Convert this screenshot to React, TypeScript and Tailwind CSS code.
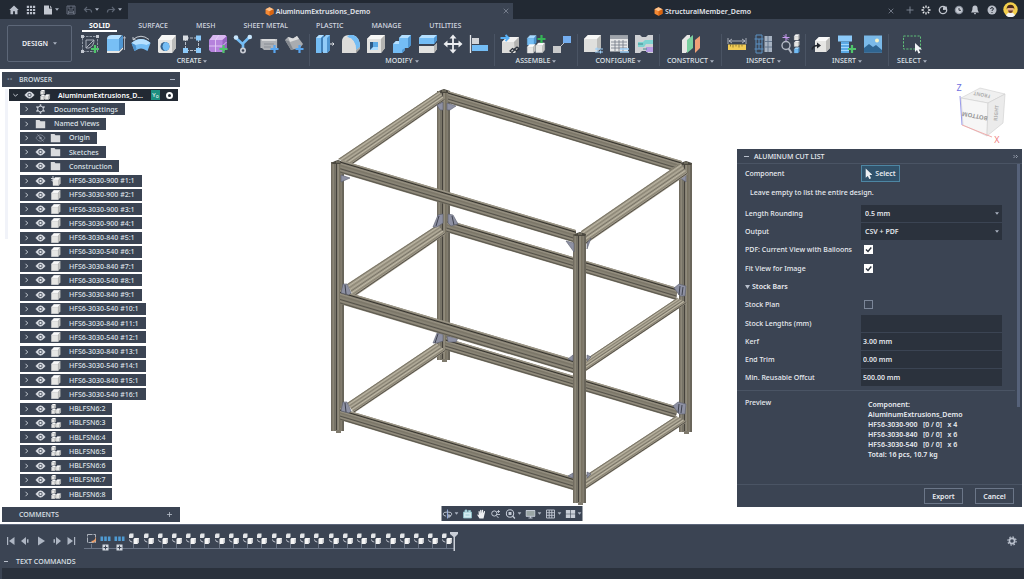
import type { ReactNode } from "react";

/* ---------- shared pieces ---------- */

function Caret({ className = "" }: { className?: string }) {
  return (
    <svg viewBox="0 0 4 3" className={`h-[3px] w-[4px] shrink-0 ${className}`} aria-hidden="true">
      <path d="M0 .3h4L2 2.7z" fill="#a9b1bf" />
    </svg>
  );
}

function Icon({ children, className = "h-5 w-5", box = 20 }: { children: ReactNode; className?: string; box?: number }) {
  return (
    <svg viewBox={`0 0 ${box} ${box}`} className={`block shrink-0 ${className}`} aria-hidden="true" fill="none">
      {children}
    </svg>
  );
}

function Solid({ x = 0, y = 0, s = 1, blue = false }: { x?: number; y?: number; s?: number; blue?: boolean }) {
  const [top, front, side] = blue ? ["#a9dbff", "#74bdf5", "#4d96d2"] : ["#fafafa", "#e6e6e4", "#c4c4c2"];
  return (
    <g transform={`translate(${x} ${y}) scale(${s})`}>
      <path d="M3 0h6.500L7.500 3H.5z" fill={top} strokeLinejoin="round" stroke={top} strokeWidth=".5" />
      <path d="M.4 3h7v7h-7z" fill={front} strokeLinejoin="round" stroke={front} strokeWidth=".5" />
      <path d="M7.500 3L9.700.3v7L7.500 10z" fill={side} strokeLinejoin="round" stroke={side} strokeWidth=".4" />
    </g>
  );
}

function Plus({ x, y, c }: { x: number; y: number; c: string }) {
  return <path d={`M${x - 4} ${y}h8M${x} ${y - 4}v8`} stroke={c} strokeWidth="2.2" />;
}

/* ---------- title bar ---------- */

function Cube() {
  return (
    <Icon className="h-[9px] w-[9px]" box={10}>
      <path d="M5 .3l4.400 2.200v5L5 9.800.6 7.500v-5z" fill="#f58a35" />
      <path d="M5 .3l4.400 2.200L5 4.800.6 2.500z" fill="#ffc38c" />
      <path d="M5 4.800l4.400-2.300v5L5 9.800z" fill="#d9640f" />
    </Icon>
  );
}

function DocumentTab({ title, active }: { title: string; active?: boolean }) {
  return (
    <div className={`mt-[3px] flex flex-1 items-center px-1 ${active ? "bg-[#3b4453]" : ""}`}>
      <a href="#document" className="flex flex-1 items-center justify-center gap-[2px] font-semibold text-[#e3e6ec]">
        <Cube />
        {title}
      </a>
      <button aria-label={`Close ${title}`} className="h-[6px] w-[6px]">
        <Icon className="h-[6px] w-[6px]" box={6}>
          <path d="M.7.7l4.600 4.600M5.300.7L.7 5.300" stroke="#848c99" strokeWidth=".8" />
        </Icon>
      </button>
    </div>
  );
}

const quickActions: { label: string; art: ReactNode; caret?: boolean }[] = [
  { label: "Home", art: <path d="M5 .5L.3 5h1.200v4.300h2.600V6.200h1.800v3.100h2.600V5h1.200z" fill="#b9bfca" /> },
  {
    label: "Data panel",
    art: <path d="M.8.8h2.200v2.200H.8zM3.900.8h2.200v2.200H3.900zM7 .8h2.200v2.200H7zM.8 3.900h2.200v2.200H.8zM3.900 3.900h2.200v2.200H3.900zM7 3.900h2.200v2.200H7zM.8 7h2.200v2.200H.8zM3.900 7h2.200v2.200H3.900zM7 7h2.200v2.200H7z" fill="#b9bfca" />,
  },
  { label: "File", caret: true, art: <path d="M1 .5h5v3h3v6H1zM7 .5L9 2.800H7z" fill="#c3c8d1" /> },
  { label: "Save", art: <path d="M1 1h8v8H1zM3 1v3h4V1M2.500 9V6h5v3M3 7.400h4" stroke="#6d7583" strokeWidth=".9" /> },
  { label: "Undo", caret: true, art: <path d="M4 2L1.500 4.500 4 7M1.800 4.500H6q2.600 0 2.600 3" stroke="#5d6573" strokeWidth="1.200" /> },
  { label: "Redo", caret: true, art: <path d="M6 2l2.500 2.500L6 7M8.200 4.500H4q-2.600 0-2.600 3" stroke="#5d6573" strokeWidth="1.200" /> },
];

const sessionActions: { label: string; art: ReactNode }[] = [
  { label: "New tab", art: <path d="M5 1.500v7M1.500 5h7" stroke="#858d9a" strokeWidth=".9" /> },
  {
    label: "Extensions",
    art: (
      <path
        d="M5 .5v2.300M5 7.200v2.300M.5 5h2.300M7.200 5h2.300M1.800 1.800l1.600 1.600M6.600 6.600l1.600 1.600M8.200 1.800L6.600 3.400M3.400 6.600L1.800 8.200"
        stroke="#eef0f3"
        strokeWidth="1.300"
      />
    ),
  },
  {
    label: "Updates",
    art: (
      <>
        <circle cx="5" cy="5" r="3.700" stroke="#bfc4cd" strokeWidth="1.300" />
        <path d="M5 5V2.200l3.800-.7.2 3.300z" fill="#bfc4cd" />
      </>
    ),
  },
  {
    label: "Job status",
    art: (
      <>
        <circle cx="5" cy="5" r="4.300" fill="#8f96a3" />
        <circle cx="5" cy="5" r="3" fill="#c9cdd5" />
        <path d="M5 3v2.300h2" stroke="#222933" strokeWidth=".9" />
      </>
    ),
  },
  {
    label: "Notifications",
    art: <path d="M5 .5c-2 0-2.600 1.600-2.600 3.200C2.400 5.600 1.700 6.200 1 7.400h8C8.300 6.200 7.600 5.600 7.600 3.700 7.600 2.100 7 .5 5 .5zM4 8.100h2q-.1 1.300-1 1.300T4 8.100z" fill="#bfc4cd" />,
  },
  {
    label: "Help",
    art: (
      <>
        <circle cx="5" cy="5" r="4.500" fill="#b9bec8" />
        <path d="M3.600 4q0-1.400 1.400-1.400T6.400 4q0 .8-1.400 1.400v.6M5 7v1" stroke="#222933" strokeWidth="1" />
      </>
    ),
  },
];

function TitleBar() {
  return (
    <header className="flex h-[19px] bg-[#222933]">
      <div className="flex w-32 items-center gap-[7px] pl-[9px]">
        {quickActions.map((a) => (
          <button key={a.label} aria-label={a.label} className="flex items-center gap-[2px]">
            <Icon className="h-[10px] w-[10px]" box={10}>{a.art}</Icon>
            {a.caret && <Caret />}
          </button>
        ))}
      </div>
      <nav className="flex flex-1" aria-label="Open documents">
        <DocumentTab title="AluminumExtrusions_Demo" active />
        <DocumentTab title="StructuralMember_Demo" />
      </nav>
      <div className="flex w-[126px] items-center justify-between pr-[6px] pl-[7px]">
        {sessionActions.map((a) => (
          <button key={a.label} aria-label={a.label}>
            <Icon className="h-[10px] w-[10px]" box={10}>{a.art}</Icon>
          </button>
        ))}
        <button aria-label="Account">
          <Icon className="h-[15px] w-[15px]" box={15}>
            <circle cx="7.500" cy="7.500" r="7.200" fill="#f3cf4c" />
            <path d="M3 13.500q1-3 4.500-3t4.500 3a7.200 7.200 0 0 1-9 0z" fill="#f4f4f4" />
            <circle cx="7.500" cy="7.500" r="3" fill="#e3ad88" />
            <path d="M3.600 7.500Q3.500 2.700 7.500 2.700t3.900 4.800l-1-1.500H4.600z" fill="#4a2a1e" />
            <path d="M5 8.500h5q-.5 2.500-2.500 2.500T5 8.500z" fill="#6b3a28" />
          </Icon>
        </button>
      </div>
    </header>
  );
}

/* ---------- ribbon ---------- */

const ribbonTabs = ["SOLID", "SURFACE", "MESH", "SHEET METAL", "PLASTIC", "MANAGE", "UTILITIES"];

const tools: Record<string, ReactNode> = {
  sketch: (
    <>
      <path d="M2.500 2.500h15v15h-15z" stroke="#a7aeba" strokeWidth=".8" strokeDasharray="2.500 1" />
      <path d="M1 1h3v3H1zM16 1h3v3h-3zM1 16h3v3H1z" fill="#c3c8d1" />
      <path d="M6 6v8h3q5-2 5-8zM6 14l8-8" stroke="#b4bac5" strokeWidth=".9" />
      <Plus x={15} y={15} c="#4fc56b" />
    </>
  ),
  extrude: (
    <>
      <path d="M1 17h12l4-4v2l-4 4H1z" fill="#e6e6e4" />
      <path d="M1 5q0-4 5-4h10l-3 4z" fill="#b5e0ff" />
      <path d="M1 5h12v12H1z" fill="#78bff5" />
      <path d="M13 5l4-4v12l-4 4z" fill="#4f96d2" />
      <path d="M18.500 16V3M17.200 4.500l1.300-2 1.300 2" stroke="#c3c8d1" strokeWidth=".8" />
    </>
  ),
  revolve: (
    <>
      <path d="M.5 9Q10 1 19.500 9l-3 8-4-2q-2.500-1-5 0l-4 2z" fill="#74bdf5" />
      <path d="M.5 9Q10 1 19.500 9l-4 2q-5-2-11 0z" fill="#b5e0ff" />
      <path d="M.5 9l3 8 2-2-1-4z" fill="#4c92cd" />
      <path d="M2 5.500Q10-1 18 5.500M2 3v2.700h2.500" stroke="#d6dae0" strokeWidth=".9" />
    </>
  ),
  hole: (
    <>
      <path d="M1 6l4-5h13l1 1v12l-4 5H2l-1-1z" fill="#e6e6e4" />
      <path d="M1 6l4-5h14l-4 5z" fill="#f7f7f6" />
      <path d="M15 6l4-4.500V14l-4 5z" fill="#bcbcba" />
      <circle cx="8" cy="12.500" r="4.500" fill="#36618a" />
      <path d="M5.500 12.500q0-3 2.500-4.500 4.500.3 4.500 4.500T8 17q-2.500-1.500-2.500-4.500z" fill="#74bdf5" />
    </>
  ),
  pattern: (
    <>
      <path d="M4 4h12M3.500 4v12M4 16.500h12M16.500 5v11" stroke="#c3c8d1" strokeWidth=".9" strokeDasharray="3 1" />
      <path d="M1 1.500h5v5H1z" fill="#d9dde2" />
      <path d="M14 1.500h5v5h-5zM1 14h5v5H1zM14 14h5v5h-5z" fill="#8ccafa" />
    </>
  ),
  form: (
    <>
      <path d="M1 6l4-5h12l2 2v11l-4 4H3l-2-2z" fill="#b582dc" strokeLinejoin="round" />
      <path d="M1.500 6L5 1h12l1.500 1.500L14.500 6z" fill="#d9b9f1" />
      <path d="M14.500 6l4.500-4v12l-4.500 4z" fill="#9564bf" />
      <path d="M7.500 6v12M1 12h13.500l4-4M11 1L7.500 6" stroke="#e9d4f8" strokeWidth=".8" />
      <Plus x={15.500} y={15} c="#4fc56b" />
    </>
  ),
  derive: (
    <>
      <path d="M3 4l6.500 6L16 3.500M10 10v6" stroke="#74bdf5" strokeWidth="2.600" />
      <circle cx="3" cy="3.500" r="2.300" fill="#c8e6fc" />
      <circle cx="16.800" cy="3" r="2.300" fill="#c8e6fc" />
      <circle cx="10" cy="16.500" r="3" fill="#c9cdd5" />
      <circle cx="10" cy="16.500" r="1.300" fill="#3b4453" />
    </>
  ),
  gear: (
    <>
      <path d="M1.500 9.500h17" stroke="#c3c5c8" strokeWidth="9" strokeDasharray="2.200 1.400" />
      <path d="M3 5h13l2 3v5l-3 3H5l-3-3V7z" fill="#aeb1b5" />
      <path d="M3 5h13l1 2H3z" fill="#d9dadb" />
      <path d="M5 10h10M5 13h7" stroke="#868b92" strokeWidth=".9" />
      <Plus x={15.500} y={15} c="#58a6f0" />
    </>
  ),
  bar: (
    <>
      <path d="M1 6l3-3 5 1.500L13 2l6 8-3 4-9 2z" fill="#a9acb0" />
      <path d="M4 3l5 1.500L13 2l2 3-9 3z" fill="#dcddde" />
      <path d="M1 6l6 10 2-1-4-8z" fill="#83888f" />
      <Plus x={15.500} y={15} c="#58a6f0" />
    </>
  ),
  press: (
    <>
      <path d="M1 4l3-3h5v15l-3 3H1z" fill="#74bdf5" />
      <path d="M1 4l3-3h5L6 4z" fill="#b5e0ff" />
      <path d="M6 4l3-3v15l-3 3z" fill="#3f7fb8" />
      <path d="M8 4l3-3h4v15l-3 3H8z" fill="#91ccf9" />
      <path d="M12 4l3-3v15l-3 3z" fill="#4f96d2" />
      <path d="M15 10h4M17.500 8.500L19 10l-1.500 1.500" stroke="#e4e6ea" strokeWidth="1" />
    </>
  ),
  fillet: (
    <>
      <path d="M1 8q0-7 7-7h4q7 2 7 12l-4 6H1z" fill="#e2e2e0" />
      <path d="M8 1h4q7 2 7 12l-4 3Q15 5 6 3z" fill="#74bdf5" />
      <path d="M1 8q1-5 5-5 9 2 9 13v3H1z" fill="#dcdcda" />
      <path d="M15 16l4-3v2l-4 4z" fill="#a5a5a3" />
    </>
  ),
  shell: (
    <>
      <path d="M1 5l4-4h14v13l-4 5H1z" fill="#e2e2e0" />
      <path d="M1 5l4-4h14l-4 4z" fill="#f7f7f6" />
      <path d="M15 5l4-4v13l-4 5z" fill="#b4b4b2" />
      <path d="M4 8h8v8H4z" fill="#2e5a85" />
      <path d="M7 8h5v5H7z" fill="#5ba9e5" />
      <path d="M4 16l3-3h5v3z" fill="#a9dbff" />
    </>
  ),
  combine: (
    <>
      <path d="M7 4l3-3h9v10l-3 3h-3v2l-3 3H1V10l3-3h3z" fill="#74bdf5" />
      <path d="M7 4l3-3h9l-3 3zM1 10l3-3h3v3z" fill="#b5e0ff" />
      <path d="M16 4l3-3v10l-3 3zM10 16l3-2v2l-3 3z" fill="#4f96d2" />
    </>
  ),
  split: (
    <>
      <path d="M1 4l3-3h15v5l-3 4H1z" fill="#74bdf5" />
      <path d="M1 4l3-3h15l-3 3z" fill="#b5e0ff" />
      <path d="M16 4l3-3v5l-3 4z" fill="#4f96d2" />
      <path d="M1 12h15l3-3v6l-3 4H1z" fill="#e2e2e0" />
      <path d="M16 12l3-3v6l-3 4z" fill="#b4b4b2" />
    </>
  ),
  move: (
    <path
      d="M10 .5L6.500 4.500h2.600v4.600H4.500V6.500L.5 10l4 3.500v-2.600h4.600v4.600H6.500L10 19.500l3.500-4h-2.600v-4.600h4.600v2.600l4-3.500-4-3.500v2.600h-4.600V4.500h2.600z"
      fill="#eceef1"
    />
  ),
  align: (
    <>
      <path d="M1.500 1v18" stroke="#e4e6ea" strokeWidth="1.300" />
      <path d="M3 4h7v6H3z" fill="#d3d5d8" />
      <path d="M3 11h16v6H3z" fill="#74bdf5" />
    </>
  ),
  newComponent: (
    <>
      <path d="M2 8l5-5h12v9l-4 7H2z" fill="#dcdcda" />
      <path d="M2 8l5-5h12l-5 5z" fill="#f2f2f1" />
      <path d="M14 8l5-5v9l-4 7z" fill="#b4b4b2" />
      <path d="M.5 4h7M5.500 1l3 3-3 3" stroke="#58b0f5" strokeWidth="2" />
      <path d="M10 17l2.500-2.500 2 1.500L12 18.500zM14.500 15l2.500-2 2 2-2.500 2z" stroke="#2b323d" strokeWidth="1.300" />
    </>
  ),
  addComponent: (
    <>
      <Solid x={1} y={1.500} s={0.95} blue />
      <Solid x={1} y={10.500} s={0.85} />
      <Solid x={9.500} y={9} s={0.95} />
      <Plus x={15.500} y={5} c="#35b556" />
    </>
  ),
  joint: (
    <>
      <path d="M9 12l3-3" stroke="#dfe2e6" strokeWidth=".8" />
      <path d="M1 12h8v7H1z" fill="#c9cacb" />
      <path d="M11 2h8v7h-8z" fill="#74aef0" />
    </>
  ),
  configure: (
    <>
      <path d="M1 5l4-4h13v13l-4 4H1z" fill="#dfdfdd" />
      <path d="M1 5l4-4h13l-4 4z" fill="#f7f7f6" />
      <path d="M14 5l4-4v13l-4 4z" fill="#bcbcba" />
      <path d="M12 15h8M12 18h8M14 13.500v3M17.500 16.500v3" stroke="#9fd0f7" strokeWidth="1.100" />
    </>
  ),
  table: (
    <>
      <path d="M1 1.500h18v16H1z" fill="#e6e7e8" />
      <path d="M1 1.500h18v3.500H1z" fill="#9fa4ab" />
      <path d="M2 8h16M2 11h16M2 14h16M6 6v11M10 6v11M14 6v11" stroke="#6f7783" strokeWidth=".8" />
      <path d="M11 15h9M11 18h9" stroke="#9fd0f7" strokeWidth="1.300" />
    </>
  ),
  theme: (
    <>
      <path d="M1 1h5l2 2h4l2-2h5v18h-5l-2-2H8l-2 2H1z" fill="#cfd1d4" />
      <path d="M4 8h5l2-2h8v4h-7l-2 3H4z" fill="#7fd4d2" />
      <path d="M12 13h7v5h-7z" fill="#b59be3" />
      <path d="M4 10h5M9 15h4" stroke="#3b7f86" strokeWidth=".9" />
    </>
  ),
  plane: (
    <>
      <path d="M1 6l5-5h3v13l-4 5H1z" fill="#e7e7e5" />
      <path d="M6 6l6-5v13l-6 5z" fill="#7ad0a0" />
      <path d="M14 6l5-4v12l-5 5z" fill="#f0a077" />
    </>
  ),
  measure: (
    <>
      <path d="M1 4v6M19 4v6M2 7h16M5 5L2 7l3 2M15 5l3 2-3 2" stroke="#c3c8d1" strokeWidth=".8" />
      <path d="M1 10.500h18v5.500H1z" fill="#f2cc55" />
      <path d="M3.500 10.500v2M6 10.500v3M9 10.500v2M12 10.500v3M15 10.500v2" stroke="#6b5a20" strokeWidth=".7" />
    </>
  ),
  section: (
    <>
      <path d="M2 1h6v18H2zM.5 5h9M.5 15h9M5 5v10M2 10h6" stroke="#5d92c4" strokeWidth="1" />
      <path d="M10.500 2H18v16h-7.500z" fill="#a7b3c2" />
      <path d="M10.500 7.500H18M10.500 13H18M14 2v16" stroke="#5e7088" strokeWidth=".9" />
    </>
  ),
  interfere: (
    <>
      <path d="M6 0v7M2.500 3.500h7M3.700 1.200l4.600 4.600" stroke="#c79af0" strokeWidth="1" />
      <circle cx="6" cy="11.500" r="4" stroke="#b4bac5" strokeWidth="1.400" />
      <path d="M8.500 14.500l3 4.500" stroke="#b4bac5" strokeWidth="2" />
      <Solid x={14} y={0.5} s={0.55} />
      <Solid x={14} y={7} s={0.55} />
      <Solid x={14} y={13.500} s={0.55} blue />
    </>
  ),
  insert: (
    <>
      <path d="M4 7l4-4h11v11l-4 4H4z" fill="#e6e6e4" />
      <path d="M4 7l4-4h11l-4 4z" fill="#fafafa" />
      <path d="M15 7l4-4v11l-4 4z" fill="#bcbcba" />
      <path d="M1 15.500q1-4 6-4" stroke="#23272e" strokeWidth="1.600" />
      <path d="M6 8.500l4 3-4 3z" fill="#23272e" />
    </>
  ),
  bolt: (
    <>
      <path d="M1 1.500h14v6H1z" fill="#8ccafa" />
      <path d="M4 7.500h8V19H4z" fill="#5ba9e5" />
      <path d="M4 10.500h8M4 13.500h8M4 16.500h8" stroke="#a9dbff" strokeWidth=".9" />
      <Plus x={15} y={15} c="#4fc56b" />
    </>
  ),
  canvas: (
    <>
      <path d="M1 1.500h18v17H1z" fill="#7ab9e8" />
      <circle cx="14" cy="6.500" r="2" fill="#f4f2c8" />
      <path d="M1 14l5-4 4 3 3-2 6 5v2.500H1z" fill="#2f6591" />
    </>
  ),
  select: (
    <>
      <path d="M1.500 2h17v13h-17z" stroke="#5fbf78" strokeWidth="1" strokeDasharray="2.200 1.300" />
      <path d="M13 9v9l2-2 1.500 3.500 1.800-.8-1.600-3.200H20z" fill="#f4f5f7" />
    </>
  ),
};

const groups: { name: string; width: string; items: string[] }[] = [
  { name: "CREATE", width: "w-[235px]", items: ["sketch", "extrude", "revolve", "hole", "pattern", "form", "derive", "gear", "bar"] },
  { name: "MODIFY", width: "w-[185px]", items: ["press", "fillet", "shell", "combine", "split", "move", "align"] },
  { name: "ASSEMBLE", width: "w-[83px]", items: ["newComponent", "addComponent", "joint"] },
  { name: "CONFIGURE", width: "w-[82px]", items: ["configure", "table", "theme"] },
  { name: "CONSTRUCT", width: "w-[62px]", items: ["plane"] },
  { name: "INSPECT", width: "w-[84px]", items: ["measure", "section", "interfere"] },
  { name: "INSERT", width: "w-[83px]", items: ["insert", "bolt", "canvas"] },
  { name: "SELECT", width: "w-[46px]", items: ["select"] },
];

function Ribbon() {
  return (
    <section className="flex h-[50px] items-start bg-[#3b4453] pl-[7px]" aria-label="Ribbon">
      <button className="mt-[6px] flex h-[37px] w-[65px] items-center justify-center gap-[5px] rounded-[2px] border border-[#5d6778] font-semibold text-[#eef0f4]">
        DESIGN
        <Caret />
      </button>
      <div className="pl-[3px]">
        <nav className="flex gap-[14px] pl-[7px]" aria-label="Workspace tabs">
          {ribbonTabs.map((t, i) => (
            <a
              key={t}
              href={`#${t.toLowerCase()}`}
              className={`h-[13px] border-b-2 px-[7px] leading-[13px] ${
                i === 0 ? "border-white font-bold text-white" : "border-transparent font-medium text-[#d3d8e0]"
              }`}
            >
              {t}
            </a>
          ))}
        </nav>
        <div className="mt-[2px] flex">
          {groups.map((g) => (
            <div key={g.name} className={`flex h-[32px] flex-col border-r border-[#4a5464] last:border-r-0 ${g.width}`}>
              <div className={`flex px-[5px] ${g.items.length === 1 ? "justify-center" : "justify-between"}`}>
                {g.items.map((n) => (
                  <button key={n} aria-label={n} className="h-5 w-5">
                    <Icon>{tools[n]}</Icon>
                  </button>
                ))}
              </div>
              <button className="flex items-center justify-center gap-[2px] leading-[14px] font-medium text-[#dfe3e9]">
                {g.name}
                <Caret />
              </button>
            </div>
          ))}
        </div>
      </div>
    </section>
  );
}

/* ---------- browser tree ---------- */

function Chevron({ open }: { open?: boolean }) {
  return (
    <Icon className="h-[6px] w-[13px]" box={6}>
      <path d={open ? "M.8 2l2.200 2.200L5.200 2" : "M2 .8L4.200 3 2 5.200"} stroke="#d3d8e0" strokeWidth=".9" />
    </Icon>
  );
}

function Eye({ off }: { off?: boolean }) {
  const c = off ? "#98a0ae" : "#dcdfe5";
  return (
    <Icon className="h-[10px] w-[15px]" box={10}>
      <path d="M.3 5Q5-1.500 9.700 5 5 11.500.3 5z" fill={off ? "none" : c} stroke={c} strokeWidth=".6" />
      <circle cx="5" cy="5" r="2.100" fill="#3b4453" />
      <circle cx="5" cy="5" r="1.200" fill={c} />
      {off && <path d="M2 1.500l6 7" stroke={c} strokeWidth=".8" />}
    </Icon>
  );
}

const nodeArt: Record<string, ReactNode> = {
  settings: (
    <>
      <circle cx="5" cy="5" r="2.900" stroke="#c9ced7" strokeWidth="1" />
      <path
        d="M5 .3v2M5 7.700v2M.9 2.600l1.800 1M7.300 6.400l1.800 1M.9 7.400l1.800-1M7.300 3.600l1.800-1"
        stroke="#c9ced7"
        strokeWidth="1.600"
      />
    </>
  ),
  folder: <path d="M.3 1h3.700l1 1.200h4.700v7H.3z" fill="#d9dbde" />,
  body: <Solid x={0.6} y={0.3} s={0.94} />,
  grounded: (
    <>
      <Solid x={2.200} y={1.500} s={0.8} />
      <path d="M2.500 0v5M.5 2.500h4M1 4l1.500 1.500L4 4" stroke="#e1e4e9" strokeWidth=".9" />
    </>
  ),
  assembly: (
    <>
      <Solid x={0.8} y={0} s={0.46} />
      <Solid x={0.8} y={5} s={0.48} />
      <Solid x={5.400} y={4.500} s={0.5} />
    </>
  ),
};

type Node = { label: string; art: string; eye?: "on" | "off" };

const parts = [900, 900, 900, 900, 840, 540, 840, 540, 840, 540, 840, 540, 840, 540, 840, 540];

const nodes: Node[] = [
  { label: "Document Settings", art: "settings" },
  { label: "Named Views", art: "folder" },
  { label: "Origin", art: "folder", eye: "off" },
  { label: "Sketches", art: "folder", eye: "on" },
  { label: "Construction", art: "folder", eye: "on" },
  ...parts.map((len, i): Node => ({
    label: `HFS6-3030-${len} #${i + 1}:1`,
    art: i === 0 ? "grounded" : "body",
    eye: "on",
  })),
  ...[2, 3, 4, 5, 6, 7, 8].map((n): Node => ({ label: `HBLFSN6:${n}`, art: "assembly", eye: "on" })),
];

function Browser() {
  return (
    <aside className="relative flex w-[180px] shrink-0 flex-col pt-[3px] pb-[2px] pl-[2px]">
      <div className="absolute top-5 left-[5px] h-[150px] w-[3px] bg-[#f1f3f9]" />
      <h2 className="flex h-[15px] items-center bg-[#3b4453] px-[5px] font-medium text-[#dfe3e9]">
        <span className="w-3 text-[#7d8797]">••</span>
        <span className="flex-1">BROWSER</span>
        <button aria-label="Collapse browser" className="h-px w-[5px] bg-[#a9b1bf]" />
      </h2>
      <ul className="mt-[2px] mb-[7px] flex flex-1 flex-col items-start justify-between">
        <li className="ml-[7px] flex h-[12px] w-[169px] items-center bg-[#222933] pr-[5px] font-semibold text-white">
          <Chevron open />
          <Eye />
          <Icon className="h-[10px] w-[15px]" box={10}>{nodeArt.assembly}</Icon>
          <span className="ml-[6px] flex-1">AluminumExtrusions_D...</span>
          <span className="mr-[6px] flex h-[10px] w-[9px] items-center justify-center bg-[#1c8f80] text-[6px] font-normal text-white">
            Y<sub className="text-[5px] leading-none">o</sub>
          </span>
          <input
            type="radio"
            defaultChecked
            aria-label="Activate component"
            className="h-[7px] w-[7px] appearance-none rounded-full border-2 border-white bg-[#222933]"
          />
        </li>
        {nodes.map((n) => (
          <li key={n.label} className="ml-[18px] flex h-[12px] items-center bg-[#3b4453] pr-[7px] font-medium text-[#dfe3e9]">
            <Chevron />
            {n.eye && <Eye off={n.eye === "off"} />}
            <Icon className="h-[10px] w-[15px]" box={10}>{nodeArt[n.art]}</Icon>
            <span className="ml-[6px]">{n.label}</span>
          </li>
        ))}
      </ul>
      <h2 className="flex h-[15px] items-center justify-between bg-[#3b4453] pr-2 pl-[17px] font-medium text-[#dfe3e9]">
        COMMENTS
        <button aria-label="Add comment">
          <Icon className="h-[5px] w-[5px]" box={5}>
            <path d="M2.500 0v5M0 2.500h5" stroke="#b9c0cc" strokeWidth=".8" />
          </Icon>
        </button>
      </h2>
    </aside>
  );
}

/* ---------- model ---------- */

type Pt = [number, number];
type BeamShape = { a: Pt; b: Pt; c: Pt; d: Pt; tone: "warm" | "cool" | "post" };

const tones = {
  warm: { base: "#a09a89", stripes: ["#7b7668", "#bdb7a5", "#8b8575", "#b3ad9b", "#787366", "#bfb9a7", "#8a8474", "#55514a"] },
  cool: { base: "#827d6f", stripes: ["#a09a8a", "#34322d", "#989283", "#7c7769", "#8b8677", "#55524a", "#948e7f", "#5c594f"] },
  post: { base: "#7f7a6d", stripes: ["#6f6b5f", "#8f8a7b", "#716d61", "#45423b", "#9b9585", "#77725f", "#837e70", "#55524a"] },
};

/* a→b is one long edge of the profile, d→c the opposite one. */
function Beam({ a, b, c, d, tone }: BeamShape) {
  const t = tones[tone];
  const n = t.stripes.length;
  return (
    <g>
      <polygon points={[a, b, c, d].join(" ")} fill={t.base} />
      {t.stripes.map((color, i) => {
        const k = (i + 0.4) / n;
        return (
          <line
            key={i}
            x1={a[0] + (d[0] - a[0]) * k}
            y1={a[1] + (d[1] - a[1]) * k}
            x2={b[0] + (c[0] - b[0]) * k}
            y2={b[1] + (c[1] - b[1]) * k}
            stroke={color}
            strokeWidth="1"
          />
        );
      })}
    </g>
  );
}

function Post({ x, top, bottom }: { x: number; top: number; bottom: number }) {
  return (
    <g>
      <Beam a={[x, top]} b={[x, bottom]} c={[x + 13, bottom]} d={[x + 13, top]} tone="post" />
      <path d={`M${x + 5} ${bottom - 1}h5v3h-5z`} fill="#7f7a6d" />
      <path d={`M${x} ${top + 1}l4-2 3-1 3 1 3 1-1 2H${x + 2}z`} fill="#4b483f" />
      <path d={`M${x + 5} ${top}h4`} stroke="#8f8a7b" strokeWidth="1" />
    </g>
  );
}

const rear: BeamShape[] = [
  { a: [448, 91], b: [682, 161], c: [680, 173], d: [448, 103], tone: "cool" },
  { a: [448, 220], b: [678, 288], c: [676, 300], d: [446, 232], tone: "cool" },
  { a: [446, 338], b: [679, 407], c: [675, 418], d: [445, 350], tone: "cool" },
  { a: [338, 159], b: [439, 91], c: [445, 100], d: [353, 164], tone: "warm" },
  { a: [347, 284], b: [437, 225], c: [446, 234], d: [354, 297], tone: "warm" },
  { a: [347, 403], b: [436, 343], c: [446, 351], d: [354, 413], tone: "warm" },
];

const front: BeamShape[] = [
  { a: [341, 160], b: [576, 230], c: [576, 243], d: [340, 173], tone: "cool" },
  { a: [340, 290], b: [576, 360], c: [576, 374], d: [340, 304], tone: "cool" },
  { a: [340, 408], b: [576, 478], c: [576, 491], d: [340, 420], tone: "cool" },
  { a: [581, 231], b: [680, 163], c: [688, 174], d: [586, 244], tone: "warm" },
  { a: [586, 359], b: [677, 298], c: [687, 303], d: [586, 371], tone: "warm" },
  { a: [586, 475], b: [676, 416], c: [687, 422], d: [586, 489], tone: "warm" },
];

const rearBrackets = [
  "437,105 443,102 443,110 440,110",
  "447,103 456,106 450,110 447,110",
  "433,227 438,215 443,214 443,223 437,227",
  "448,214 453,215 458,224 451,226 448,223",
  "433,343 437,333 443,334 443,341 437,343",
  "447,336 458,338 456,342 448,342",
  "680,178 686,174 686,182",
];

const frontBrackets = [
  "341,175 350,178 341,182",
  "341,293 343,284 347,284 351,293 349,295",
  "341,411 343,402 347,402 351,411 349,413",
  "566,241 574,243 574,252",
  "587,243 591,238 587,249",
  "568,359 573,355 573,361",
  "587,355 591,357 587,361",
  "568,476 573,473 573,478",
  "587,472 591,474 587,478",
  "674,288 679,284 686,286 685,296 680,296",
  "673,406 678,402 686,404 685,414 679,414",
];

function Brackets({ shapes }: { shapes: string[] }) {
  return (
    <g fill="#8d90a2" stroke="#5c5f6e" strokeWidth=".6">
      {shapes.map((p) => (
        <polygon key={p} points={p} />
      ))}
    </g>
  );
}

/* Dark creases that split the larger gussets into two plates. */
const creases = "M439 216l-3 10M452 216l2 9M438 334l-3 9M345 285l1 9M345 403l1 9M680 286l-1 9M679 404l-1 9M683 287l-1 8M682 405l-1 8";

function Model() {
  return (
    <svg viewBox="180 69 557 455" className="h-full w-full min-w-0 flex-1" role="img" aria-label="Aluminum extrusion frame">
      <Post x={437} top={91} bottom={360} />
      <Post x={679} top={163} bottom={432} />
      {rear.map((s, i) => (
        <Beam key={i} {...s} />
      ))}
      <Brackets shapes={rearBrackets} />
      <Post x={331} top={162} bottom={431} />
      {front.slice(0, 3).map((s, i) => (
        <Beam key={i} {...s} />
      ))}
      {front.slice(3).map((s, i) => (
        <Beam key={i} {...s} />
      ))}
      <Post x={573} top={234} bottom={503} />
      <Brackets shapes={frontBrackets} />
      <path d={creases} stroke="#3f424e" strokeWidth="1" fill="none" />
    </svg>
  );
}

function ViewCube() {
  return (
    <svg viewBox="737 69 287 80" className="h-20 w-full" role="img" aria-label="View cube">
      <path d="M961 98l19-10 25 6-17 9z" fill="#f0f0f0" stroke="#cfcfcf" strokeWidth=".6" />
      <path d="M961 98l27 5-1 33-24-11z" fill="#f6f6f6" stroke="#cccccc" strokeWidth=".6" />
      <path d="M988 103l17-9-2 29-16 13z" fill="#ebebeb" stroke="#cccccc" strokeWidth=".6" />
      <path d="M960 96l2 29" stroke="#8f90e8" strokeWidth=".9" />
      <path d="M962 125l30 12" stroke="#f0a3a3" strokeWidth=".9" />
      <g fontFamily="Noto Sans, sans-serif" textAnchor="middle">
        <text x="975" y="116" fontSize="6" fontWeight="700" fill="#9a9a9a" transform="rotate(191 975 115)">BOTTOM</text>
        <text x="982" y="95" fontSize="5" fontWeight="700" fill="#b0b0b0" transform="rotate(191 982 94)">FRONT</text>
        <text x="996" y="115" fontSize="5" fontWeight="700" fill="#b0b0b0" transform="rotate(-85 996 113)">RIGHT</text>
        <text x="959" y="91" fontSize="9" fill="#6e6fe0">Z</text>
        <text x="997" y="143" fontSize="9" fill="#ef7f7f">X</text>
      </g>
    </svg>
  );
}

/* ---------- navigation bar ---------- */

const navTools: { label: string; art: ReactNode; caret?: boolean }[] = [
  {
    label: "Orbit",
    caret: true,
    art: (
      <>
        <path d="M5 .5v9" stroke="#8fa6d8" strokeWidth="1.100" />
        <path d="M3.500 7.200Q.5 6.500.5 5q0-2 4.500-2t4.500 2q0 1.500-3 2.200M6.200 5.500v3l2-1.500z" stroke="#b9c0cc" strokeWidth="1" />
      </>
    ),
  },
  { label: "Look at", art: <path d="M1 3h8v6H1zM2.500 3V1h2v2M6 3V1.500h2V3M3 6h4" fill="#d3ecf0" stroke="#8fc3cc" strokeWidth=".8" /> },
  {
    label: "Pan",
    art: <path d="M3 9.500L.6 5.800q.6-.8 1.700.3L2 2.200q.9-.6 1.200.3l.4 2V1.200q.9-.8 1.300 0V4.400L5.500.9q.9-.5 1.200.3L6.400 4.600 7.600 2q1-.3 1 .7L7.700 6.500 7 9.500z" fill="#eef0f3" />,
  },
  {
    label: "Zoom",
    art: (
      <>
        <circle cx="3.800" cy="4.500" r="2.600" stroke="#c3cad6" />
        <path d="M5.800 6.500L8 9M8 1v3M6.500 2.500h3M6.500 5.500h3" stroke="#c3cad6" strokeWidth=".9" />
      </>
    ),
  },
  {
    label: "Fit",
    caret: true,
    art: (
      <>
        <circle cx="4.500" cy="4.500" r="3.700" stroke="#c3cad6" strokeWidth="1.100" />
        <path d="M3 3h3v3H3z" fill="#c3cad6" />
        <path d="M7 7l2.500 2.500" stroke="#c3cad6" strokeWidth="1.400" />
      </>
    ),
  },
  { label: "Display settings", caret: true, art: <path d="M.5 1.500h9v5.800h-9zM3 9h4M5 7v2" fill="#9aa6a6" stroke="#c3cad6" /> },
  { label: "Grid", caret: true, art: <path d="M1 1h8v8H1zM1 3.700h8M1 6.300h8M3.700 1v8M6.300 1v8" stroke="#c3cad6" strokeWidth=".9" /> },
  {
    label: "Viewports",
    caret: true,
    art: <path d="M.2 1h4.500v3.700H.2zM5.300 1h4.500v3.700H5.300zM.2 5.300h4.500V9H.2zM5.300 5.300h4.500V9H5.300z" fill="#c9ced7" />,
  },
];

function NavigationBar() {
  return (
    <div className="absolute bottom-[3px] left-1/2 flex h-[15px] w-[141px] -translate-x-1/2 items-center justify-between bg-[#3b4453] px-px">
      {navTools.map((t) => (
        <button key={t.label} aria-label={t.label} className="flex items-center gap-[2px]">
          <Icon className="h-[10px] w-[10px]" box={10}>{t.art}</Icon>
          {t.caret && <Caret />}
        </button>
      ))}
    </div>
  );
}

/* ---------- cut list dialog ---------- */

const labelCol = "w-[116px] shrink-0";

function Row({ id, label, tall, children }: { id: string; label: string; tall?: boolean; children: ReactNode }) {
  return (
    <div className={`flex items-center ${tall ? "h-[19px]" : "h-[18px]"}`}>
      <label htmlFor={id} className={labelCol}>{label}</label>
      {children}
    </div>
  );
}

function SelectField({ id, options }: { id: string; options: string[] }) {
  return (
    <div className="relative h-[17px] flex-1">
      <select id={id} className="h-full w-full appearance-none bg-[#2b323d] px-1 font-semibold text-[#e3e6ec]">
        {options.map((o) => (
          <option key={o}>{o}</option>
        ))}
      </select>
      <Caret className="pointer-events-none absolute top-[7px] right-[3px]" />
    </div>
  );
}

function TextField({ id, value }: { id: string; value: string }) {
  return <input id={id} type="text" defaultValue={value} className="h-[17px] min-w-0 flex-1 bg-[#2b323d] px-[2px] font-semibold text-[#e3e6ec]" />;
}

function CheckField({ id, checked }: { id: string; checked?: boolean }) {
  return (
    <span className="relative ml-[3px] h-[9px] w-[9px]">
      <input
        id={id}
        type="checkbox"
        defaultChecked={checked}
        className="peer block h-[9px] w-[9px] appearance-none border border-[#7b8698] checked:border-white checked:bg-white"
      />
      <svg viewBox="0 0 9 9" className="pointer-events-none absolute inset-0 hidden h-[9px] w-[9px] peer-checked:block" fill="none" aria-hidden="true">
        <path d="M2 4.500l2 2 3.300-4" stroke="#2b323d" strokeWidth="1.400" />
      </svg>
    </span>
  );
}

function CutList() {
  return (
    <section className="mr-[2px] flex flex-col bg-[#3b4453] font-medium text-[#e9ecf1]" aria-label="Aluminum cut list">
      <h2 className="flex h-[15px] items-center border-b border-[#4a5464] px-[7px]">
        <button aria-label="Collapse" className="mr-[5px] h-px w-[5px] bg-[#b9c0cc]" />
        <span className="flex-1">ALUMINUM CUT LIST</span>
        <Icon className="-mr-[3px] h-[5px] w-[5px]" box={5}>
          <path d="M.5 1L2 2.500.5 4M3 1l1.500 1.500L3 4" stroke="#a9b1bf" strokeWidth=".8" />
        </Icon>
      </h2>
      <div className="relative">
        <div className="absolute top-0 right-[2px] h-[243px] w-[3px] bg-[#56627a]" />
        <div className="pr-5 pb-1 pl-2">
          <div className="flex h-[18px] items-center">
            <span className={labelCol}>Component</span>
            <button className="flex h-[17px] w-[39px] items-center justify-center gap-[3px] border border-[#4d86a3] bg-[#31526a] font-semibold">
              <Icon className="h-[11px] w-[7px]" box={10}>
                <path d="M1-2v13l3-2.600L6.200 13l2.400-1.200L6.500 7.300H11z" fill="#eef0f3" />
              </Icon>
              Select
            </button>
          </div>
          <p className="pl-[5px] leading-[22px]">Leave empty to list the entire design.</p>
          <Row id="rounding" label="Length Rounding">
            <SelectField id="rounding" options={["0.5 mm", "1 mm"]} />
          </Row>
          <Row id="output" label="Output">
            <SelectField id="output" options={["CSV + PDF", "CSV", "PDF"]} />
          </Row>
          <Row id="balloons" label="PDF: Current View with Balloons" tall>
            <CheckField id="balloons" checked />
          </Row>
          <Row id="fit" label="Fit View for Image" tall>
            <CheckField id="fit" checked />
          </Row>
          <button className="flex h-[17px] items-center gap-[2px] font-semibold">
            <svg viewBox="0 0 5 4" className="h-1 w-[5px]" aria-hidden="true">
              <path d="M0 0h5L2.500 4z" fill="#b9c0cc" />
            </svg>
            Stock Bars
          </button>
          <Row id="plan" label="Stock Plan" tall>
            <CheckField id="plan" />
          </Row>
          <Row id="lengths" label="Stock Lengths (mm)">
            <TextField id="lengths" value="" />
          </Row>
          <Row id="kerf" label="Kerf">
            <TextField id="kerf" value="3.00 mm" />
          </Row>
          <Row id="trim" label="End Trim">
            <TextField id="trim" value="0.00 mm" />
          </Row>
          <Row id="offcut" label="Min. Reusable Offcut">
            <TextField id="offcut" value="500.00 mm" />
          </Row>
        </div>
        <div className="mr-[7px] flex border-t border-[#4a5464] pt-[7px] pb-6 pl-2">
          <span className={`leading-[10px] ${labelCol}`}>Preview</span>
          <div className="ml-[7px] pt-[2px] leading-[10px] font-semibold whitespace-pre">
            <p>Component:</p>
            <p>AluminumExtrusions_Demo</p>
            <p>{"HFS6-3030-900   [0 / 0]   x 4"}</p>
            <p>{"HFS6-3030-840   [0 / 0]   x 6"}</p>
            <p>{"HFS6-3030-540   [0 / 0]   x 6"}</p>
            <p>Total: 16 pcs, 10.7 kg</p>
          </div>
        </div>
      </div>
      <footer className="flex justify-end gap-3 border-t border-[#4a5464] px-2 py-[3px] font-semibold">
        <button className="h-4 w-[39px] border border-[#6b7688]">Export</button>
        <button className="h-4 w-[39px] border border-[#6b7688]">Cancel</button>
      </footer>
    </section>
  );
}

/* ---------- timeline ---------- */

const playback: { label: string; d: string }[] = [
  { label: "Go to start", d: "M1 1h1.200v8H1zM8.500 1v8L3 5z" },
  { label: "Step back", d: "M5 1v8L0 5zM6 3.200h1.500v3.600H6z" },
  { label: "Play", d: "M2 .5L9 5l-7 4.500z" },
  { label: "Step forward", d: "M5 1v8l5-4zM2.500 3.200H4v3.600H2.500z" },
  { label: "Go to end", d: "M8 1h1.200v8H8zM1.500 1v8L7 5z" },
];

const history = ["sketch", "pattern", "pattern", ...Array.from({ length: 23 }, () => "joint")];

function Feature({ kind }: { kind: string }) {
  return (
    <li className="flex flex-1 flex-col items-center">
      <button aria-label={kind}>
        <Icon className="h-[11px] w-[11px]" box={11}>
          {kind === "sketch" && (
            <>
              <path d="M1.500 1.500h8v8h-8z" stroke="#c9ced7" strokeWidth=".8" strokeDasharray="5 1" />
              <path d="M5 8q4 0 5-4.500L10 8l-3 2z" fill="#eba06b" />
            </>
          )}
          {kind === "pattern" && <path d="M.5 3.500h2.600v4.500H.5zM4.200 3.500h2.600v4.500H4.200zM7.900 3.500h2.600v4.500H7.900z" fill="#4f9bd3" />}
          {kind === "joint" && (
            <>
              <path d="M1 1.500L2 .5h3.500v3.500l-1 1H1z" fill="#e3e5e8" />
              <path d="M5.500 6l1-1H11v4l-1.500 2h-4z" fill="#f5f5f5" />
              <path d="M9.500 6.500L11 5v4l-1.500 2z" fill="#c4c6ca" />
              <path d="M1.500 6.500q0 2.500 2.800 2.500" stroke="#c9ced7" strokeWidth=".9" />
            </>
          )}
        </Icon>
      </button>
      {kind === "pattern" ? (
        <button aria-label="Expand group" className="z-10 -mb-[3px] h-[7px] w-[7px]">
          <Icon className="h-[7px] w-[7px]" box={7}>
            <path d="M.5.5h6v6h-6z" fill="#d3d8e0" />
            <path d="M3.500 1.500v4M1.500 3.500h4" stroke="#3b4453" strokeWidth="1" />
          </Icon>
        </button>
      ) : (
        <span className="h-1 w-px bg-[#6b7586]" />
      )}
    </li>
  );
}

function Timeline() {
  return (
    <section className="flex h-[30px] items-center border-t border-[#5c667a] bg-[#3b4453] pt-[3px] pr-[7px] pl-[6px]" aria-label="Timeline">
      <div className="flex w-[78px] gap-[5px]">
        {playback.map((p) => (
          <button key={p.label} aria-label={p.label}>
            <Icon className="h-[10px] w-[10px]" box={10}>
              <path d={p.d} fill="#aeb6c3" />
            </Icon>
          </button>
        ))}
      </div>
      <ol className="flex w-[370px] items-start border-b border-[#6b7586]">
        {history.map((k, i) => (
          <Feature key={i} kind={k} />
        ))}
      </ol>
      <svg viewBox="0 0 8 19" className="-ml-1 h-[19px] w-2" aria-hidden="true">
        <path d="M0 0h8v2L5 5v14H3.500V5L0 2z" fill="#c9ced7" />
      </svg>
      <button aria-label="Timeline settings" className="ml-auto">
        <Icon className="h-[10px] w-[10px]" box={10}>
          <circle cx="5" cy="5" r="2.600" stroke="#b9c0cc" strokeWidth="1.600" />
          <circle cx="5" cy="5" r="4.100" stroke="#b9c0cc" strokeWidth="1.200" strokeDasharray="1.600 1.620" />
        </Icon>
      </button>
    </section>
  );
}

export default function App() {
  return (
    <div className="flex min-h-screen flex-col bg-white font-['Noto_Sans',sans-serif] text-[7px] leading-none">
      <TitleBar />
      <Ribbon />
      <main className="relative flex flex-1">
        <Browser />
        <Model />
        <div className="flex w-[287px] shrink-0 flex-col">
          <ViewCube />
          <CutList />
        </div>
        <NavigationBar />
      </main>
      <Timeline />
      <section className="bg-[#3b4453] pl-[2px]" aria-label="Text commands">
        <h2 className="flex h-[14px] items-center font-medium text-[#dfe3e9]">
          <button aria-label="Collapse text commands" className="mr-[8px] ml-[2px] h-px w-[4px] bg-[#b9c0cc]" />
          TEXT COMMANDS
        </h2>
        <textarea aria-label="Command output" className="block h-[11px] w-full resize-none bg-[#2a313c]" />
      </section>
    </div>
  );
}
